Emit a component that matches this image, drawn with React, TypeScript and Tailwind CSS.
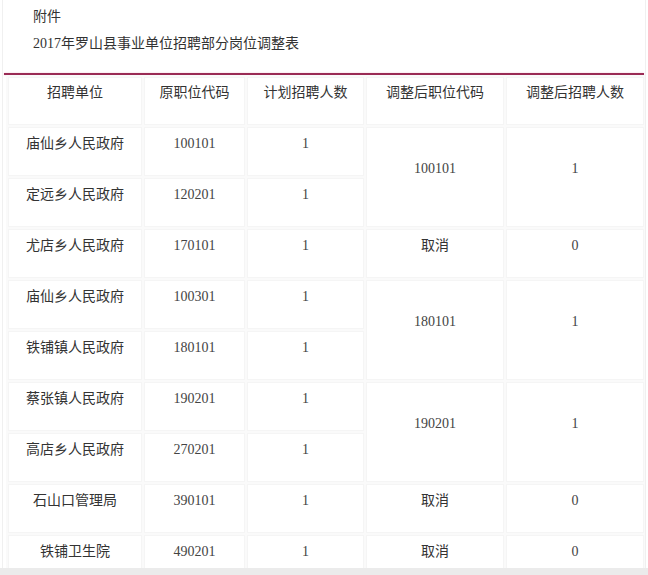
const rows: {
  unit: string;
  code: string;
  plan: string;
  adj?: { code: string; num: string; span: number };
}[] = [
  { unit: "庙仙乡人民政府", code: "100101", plan: "1", adj: { code: "100101", num: "1", span: 2 } },
  { unit: "定远乡人民政府", code: "120201", plan: "1" },
  { unit: "尤店乡人民政府", code: "170101", plan: "1", adj: { code: "取消", num: "0", span: 1 } },
  { unit: "庙仙乡人民政府", code: "100301", plan: "1", adj: { code: "180101", num: "1", span: 2 } },
  { unit: "铁铺镇人民政府", code: "180101", plan: "1" },
  { unit: "蔡张镇人民政府", code: "190201", plan: "1", adj: { code: "190201", num: "1", span: 2 } },
  { unit: "高店乡人民政府", code: "270201", plan: "1" },
  { unit: "石山口管理局", code: "390101", plan: "1", adj: { code: "取消", num: "0", span: 1 } },
  { unit: "铁铺卫生院", code: "490201", plan: "1", adj: { code: "取消", num: "0", span: 1 } },
];

const headers = ["招聘单位", "原职位代码", "计划招聘人数", "调整后职位代码", "调整后招聘人数"];

const cellClass = "border border-[#f5f5f5] bg-white p-0 text-center align-middle";

function Cell({ text, small }: { text: string; small?: boolean }) {
  return (
    <div className={`pb-[16px] leading-[18px] ${small ? "text-[14px] text-[#444]" : "text-[14px] text-[#333]"}`}>
      {text}
    </div>
  );
}

export default function App() {
  return (
    <div
      className="flex h-[575px] w-[648px] flex-col overflow-hidden bg-white"
      style={{ fontFamily: '"Liberation Serif", "Noto Sans CJK SC", serif' }}
    >
      <div className="mx-[2px] flex-1 overflow-hidden border-x border-[#f0f0f0]">
        {/* Title */}
        <div className="pl-[30px] pt-[3px] text-[14px] leading-[27px] text-[#333]">
          <p>附件</p>
          <p>2017年罗山县事业单位招聘部分岗位调整表</p>
        </div>

        <div className="mx-px mt-[16px] h-[2px] bg-[#9a2b55] shadow-[0_0_2px_#f3c4d4]" />

        {/* Table */}
        <table className="ml-[3px] w-[640px] table-fixed border-separate border-spacing-[2px] bg-[#fafafa]">
          <colgroup>
            <col className="w-[134px]" />
            <col className="w-[101px]" />
            <col className="w-[117px]" />
            <col className="w-[138px]" />
            <col className="w-[138px]" />
          </colgroup>
          <thead>
            <tr className="h-[48px]">
              {headers.map((h) => (
                <th key={h} className={`${cellClass} font-normal`}>
                  <Cell text={h} />
                </th>
              ))}
            </tr>
          </thead>
          <tbody>
            {rows.map((r, i) => (
              <tr key={i} className="h-[49px]">
                <td className={cellClass}>
                  <Cell text={r.unit} />
                </td>
                <td className={cellClass}>
                  <Cell text={r.code} small />
                </td>
                <td className={cellClass}>
                  <Cell text={r.plan} small />
                </td>
                {r.adj && (
                  <>
                    <td rowSpan={r.adj.span} className={cellClass}>
                      <Cell text={r.adj.code} small={r.adj.code !== "取消"} />
                    </td>
                    <td rowSpan={r.adj.span} className={cellClass}>
                      <Cell text={r.adj.num} small />
                    </td>
                  </>
                )}
              </tr>
            ))}
          </tbody>
        </table>
      </div>
      <div className="h-[7px] bg-[#ebebeb]" />
    </div>
  );
}
